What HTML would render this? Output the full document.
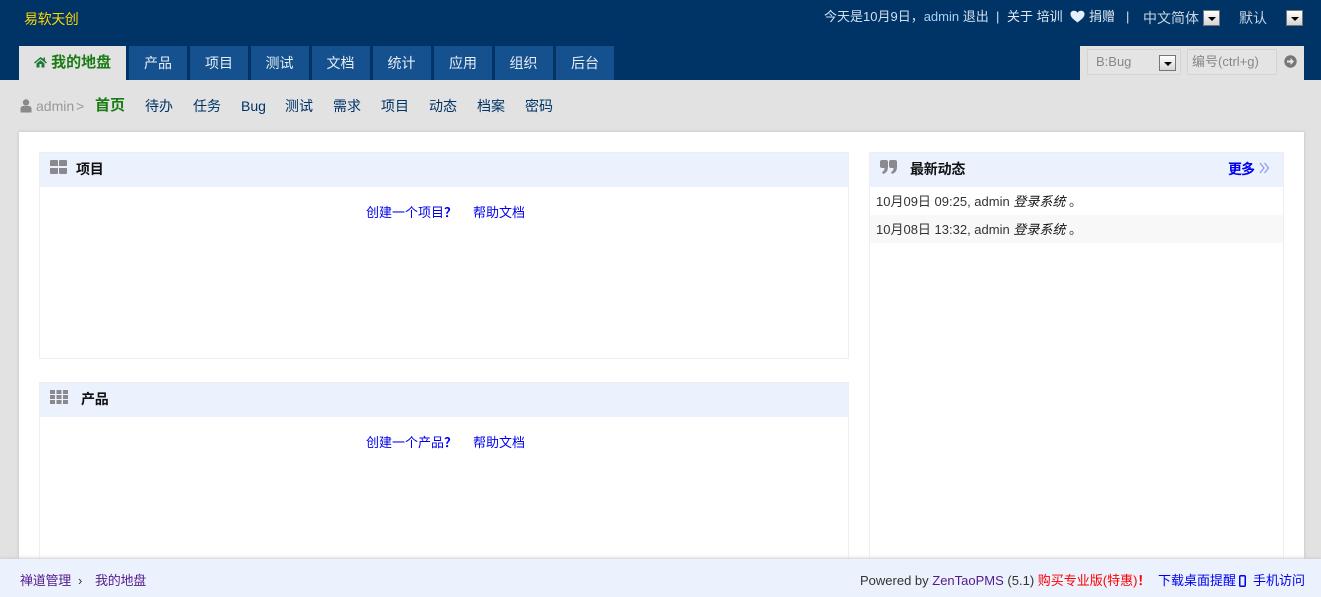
<!DOCTYPE html>
<html lang="zh">
<head>
<meta charset="utf-8">
<title>我的地盘</title>
<style>
html,body{margin:0;padding:0;width:1321px;height:597px;overflow:hidden}
#w{position:absolute;left:0;top:0;width:1321px;height:597px;overflow:hidden;background:#e2e2e2;font:13px/20px "Liberation Sans","WenQuanYi Zen Hei","Noto Sans CJK SC",sans-serif;color:#333}
.a{position:absolute;white-space:nowrap}
#top{left:0;top:0;width:1321px;height:80px;background:#003366}
.tab{position:absolute;top:46px;height:34px;background:#15508f;color:#e8eef5;font-size:14px;line-height:34px;text-align:center}
.sub{position:absolute;top:96px;font-size:14px;line-height:20px;color:#003366;white-space:nowrap}
.sel{position:absolute;width:17px;height:16px;box-sizing:border-box;background:linear-gradient(#fff,#d4d4d4);border:1px solid #777}
.sel:after{content:"";position:absolute;left:4px;top:6px;border:4px solid transparent;border-top:4px solid #000;border-bottom:0}
#card{left:19px;top:132px;width:1285px;height:470px;background:#fff;box-shadow:0 0 3px #bbb}
.blk{position:absolute;box-sizing:border-box;border:1px solid #eee;background:#fff}
.hd{position:absolute;height:34px;background:#ebf2fd}
.ttl{font-weight:bold;color:#111;font-size:14px;line-height:20px;letter-spacing:-.2px}
.lnk{color:#0000ee;font-size:13px;line-height:20px}
#foot{left:0;top:559px;width:1321px;height:38px;background:#ebf2fd;box-shadow:0 -1px 3px #ccc}
.t{font-size:13px}
</style>
</head>
<body>
<div id="w">
<div class="a" id="top"></div>
<div class="a" style="left:24px;top:9px;color:#ffd700;font-size:14px;letter-spacing:-.4px">易软天创</div>

<div class="a t" style="left:824px;top:7px;color:#cfe0f0">今天是10月9日，<span style="color:#a9d0f0">admin</span> 退出</div>
<div class="a t" style="left:996px;top:7px;color:#cfe0f0">|</div>
<div class="a t" style="left:1007px;top:7px;color:#dde8f3">关于 培训</div>
<svg class="a" style="left:1070px;top:10px" width="15" height="13" viewBox="0 0 15 13"><path d="M7.5 12.5C3 9 .5 7 .5 4 .5 2 2 .8 4 .8c1.500 0 2.800.8 3.500 2C8.200 1.600 9.500.8 11 .8c2 0 3.500 1.200 3.500 3.200 0 3-2.500 5-7 8.500z" fill="#e6f0fa"/></svg>
<div class="a t" style="left:1089px;top:7px;color:#dde8f3">捐赠</div>
<div class="a t" style="left:1126px;top:7px;color:#cfe0f0">|</div>
<div class="a" style="left:1143px;top:8px;color:#c8d4e0;font-size:14px">中文简体</div>
<div class="sel" style="left:1203px;top:10px"></div>
<div class="a" style="left:1239px;top:8px;color:#c8d4e0;font-size:14px">默认</div>
<div class="sel" style="left:1286px;top:10px"></div>

<div class="tab" style="left:19px;width:107px;background:#e2e2e2;color:#1a7a14;font-weight:bold;font-size:15px">
<svg style="vertical-align:-1px" width="13" height="12" viewBox="0 0 13 12"><path d="M6.500 1 0 6.500l1 1 5.500-4.500 5.500 4.500 1-1-2-1.700V1.500H9.500v1.500zM2.500 7.500V11.500H5.500V8h2v3.500h3V7.500l-4-3.300z" fill="#1f7a3a"/></svg> 我的地盘</div>
<div class="tab" style="left:129px;width:58px">产品</div>
<div class="tab" style="left:190px;width:58px">项目</div>
<div class="tab" style="left:251px;width:58px;text-indent:-1px">测试</div>
<div class="tab" style="left:312px;width:58px;text-indent:-1px">文档</div>
<div class="tab" style="left:373px;width:58px;text-indent:-1px">统计</div>
<div class="tab" style="left:434px;width:58px">应用</div>
<div class="tab" style="left:495px;width:58px;text-indent:-1px">组织</div>
<div class="tab" style="left:556px;width:58px">后台</div>

<div class="a" style="left:1080px;top:46px;width:224px;height:34px;background:#e2e2e2"></div>
<div class="a" style="left:1087px;top:49px;width:94px;height:26px;box-sizing:border-box;border:1px solid #d4d4d4;background:#e4e4e4;color:#888;font-size:13px;line-height:24px;padding-left:8px">B:Bug</div>
<div class="sel" style="left:1159px;top:55px"></div>
<div class="a" style="left:1187px;top:49px;width:90px;height:26px;box-sizing:border-box;border:1px solid #d4d4d4;background:#e4e4e4;color:#888;font-size:13px;line-height:24px;padding-left:4px;overflow:hidden">编号(ctrl+g)</div>
<svg class="a" style="left:1284px;top:55px" width="13" height="13" viewBox="0 0 13 13"><circle cx="6.500" cy="6.500" r="6.200" fill="#777"/><path d="M3 5.500h3.500V3l3.500 3.500L6.500 10V7.500H3z" fill="#e8e8e8"/></svg>

<svg class="a" style="left:20px;top:99px" width="12" height="14" viewBox="0 0 12 14"><circle cx="6" cy="3.500" r="3.200" fill="#8a8a8a"/><path d="M.5 13.500V9.500C.5 8 2 7 3.500 7h5C10 7 11.500 8 11.500 9.500v4z" fill="#8a8a8a"/></svg>
<div class="a" style="left:36px;top:96px;color:#999;font-size:14px">admin</div>
<div class="a" style="left:76px;top:96px;color:#999;font-size:14px">&gt;</div>
<div class="sub" style="left:95px;color:#1a7a14;font-weight:bold;font-size:15px">首页</div>
<div class="sub" style="left:145px">待办</div>
<div class="sub" style="left:193px">任务</div>
<div class="sub" style="left:241px">Bug</div>
<div class="sub" style="left:285px">测试</div>
<div class="sub" style="left:333px">需求</div>
<div class="sub" style="left:381px">项目</div>
<div class="sub" style="left:429px">动态</div>
<div class="sub" style="left:477px">档案</div>
<div class="sub" style="left:525px">密码</div>

<div class="a" id="card"></div>

<div class="blk" style="left:39px;top:152px;width:810px;height:207px"></div>
<div class="hd" style="left:40px;top:153px;width:808px"></div>
<svg class="a" style="left:50px;top:160px" width="17" height="14"><path d="M0 1q0-1 1-1h6q1 0 1 1v5H0zM9 1q0-1 1-1h6q1 0 1 1v5H9zM0 8h8v5q0 1-1 1H1q-1 0-1-1zM9 8h8v5q0 1-1 1h-6q-1 0-1-1z" fill="#8a8a8e"/></svg>
<div class="a ttl" style="left:76px;top:159px">项目</div>
<div class="a lnk" style="left:366px;top:203px">创建一个项目<b style="font-weight:bold">？</b></div>
<div class="a lnk" style="left:473px;top:203px">帮助文档</div>

<div class="blk" style="left:39px;top:382px;width:810px;height:230px"></div>
<div class="hd" style="left:40px;top:383px;width:808px"></div>
<svg class="a" style="left:50px;top:390px" width="18" height="14"><path d="M0 0h5v4H0zM6.500 0h5v4h-5zM13 0h5v4h-5zM0 5h5v4H0zM6.500 5h5v4h-5zM13 5h5v4h-5zM0 10h5v4H0zM6.500 10h5v4h-5zM13 10h5v4h-5z" fill="#8a8a8e"/></svg>
<div class="a ttl" style="left:81px;top:389px">产品</div>
<div class="a lnk" style="left:366px;top:433px">创建一个产品<b style="font-weight:bold">？</b></div>
<div class="a lnk" style="left:473px;top:433px">帮助文档</div>

<div class="blk" style="left:869px;top:152px;width:415px;height:460px"></div>
<div class="hd" style="left:870px;top:153px;width:413px"></div>
<svg class="a" style="left:880px;top:160px" width="17" height="14"><path d="M0 2Q0 0 2 0h4q2 0 2 2v5C8 11 6 13 3 14L2 12C3.500 11.500 4.500 10 4.500 8H2Q0 8 0 6zM9 2Q9 0 11 0h4q2 0 2 2v5c0 4-2 6-5 7l-1-2c1.500-.5 2.500-2 2.500-4H11Q9 8 9 6z" fill="#8a8a8e"/></svg>
<div class="a ttl" style="left:910px;top:159px">最新动态</div>
<div class="a ttl" style="left:1228px;top:159px;color:#0000ee;letter-spacing:-1px">更多</div>
<svg class="a" style="left:1259px;top:162px" width="11" height="12" fill="none" stroke="#8c96f0" stroke-width="1.200"><path d="M1 1l4 5-4 5M5.500 1l4 5-4 5"/></svg>
<div class="a" style="left:870px;top:215px;width:413px;height:28px;background:#f8f8f8"></div>
<div class="a t" style="left:876px;top:192px;color:#333">10月09日 09:25, admin <i style="color:#111">登录系统</i> 。</div>
<div class="a t" style="left:876px;top:220px;color:#333">10月08日 13:32, admin <i style="color:#111">登录系统</i> 。</div>

<div class="a" id="foot"></div>
<div class="a t" style="left:20px;top:571px;color:#551a8b;letter-spacing:-.25px">禅道管理</div>
<div class="a t" style="left:78px;top:571px;color:#333">›</div>
<div class="a t" style="left:95px;top:571px;color:#551a8b;letter-spacing:-.25px">我的地盘</div>
<div class="a t" style="left:860px;top:571px;color:#333">Powered by <span style="color:#551a8b">ZenTaoPMS</span> (5.1) <span style="color:#f00">购买专业版(特惠)<b>！</b></span></div>
<div class="a t" style="left:1158px;top:571px;color:#0000ee">下载桌面提醒</div>
<svg class="a" style="left:1239px;top:575px" width="7" height="12"><rect x=".75" y=".75" width="5.500" height="10.500" rx="1" fill="none" stroke="#0000ee" stroke-width="1.500"/></svg>
<div class="a t" style="left:1253px;top:571px;color:#0000ee">手机访问</div>
</div>
</body>
</html>
